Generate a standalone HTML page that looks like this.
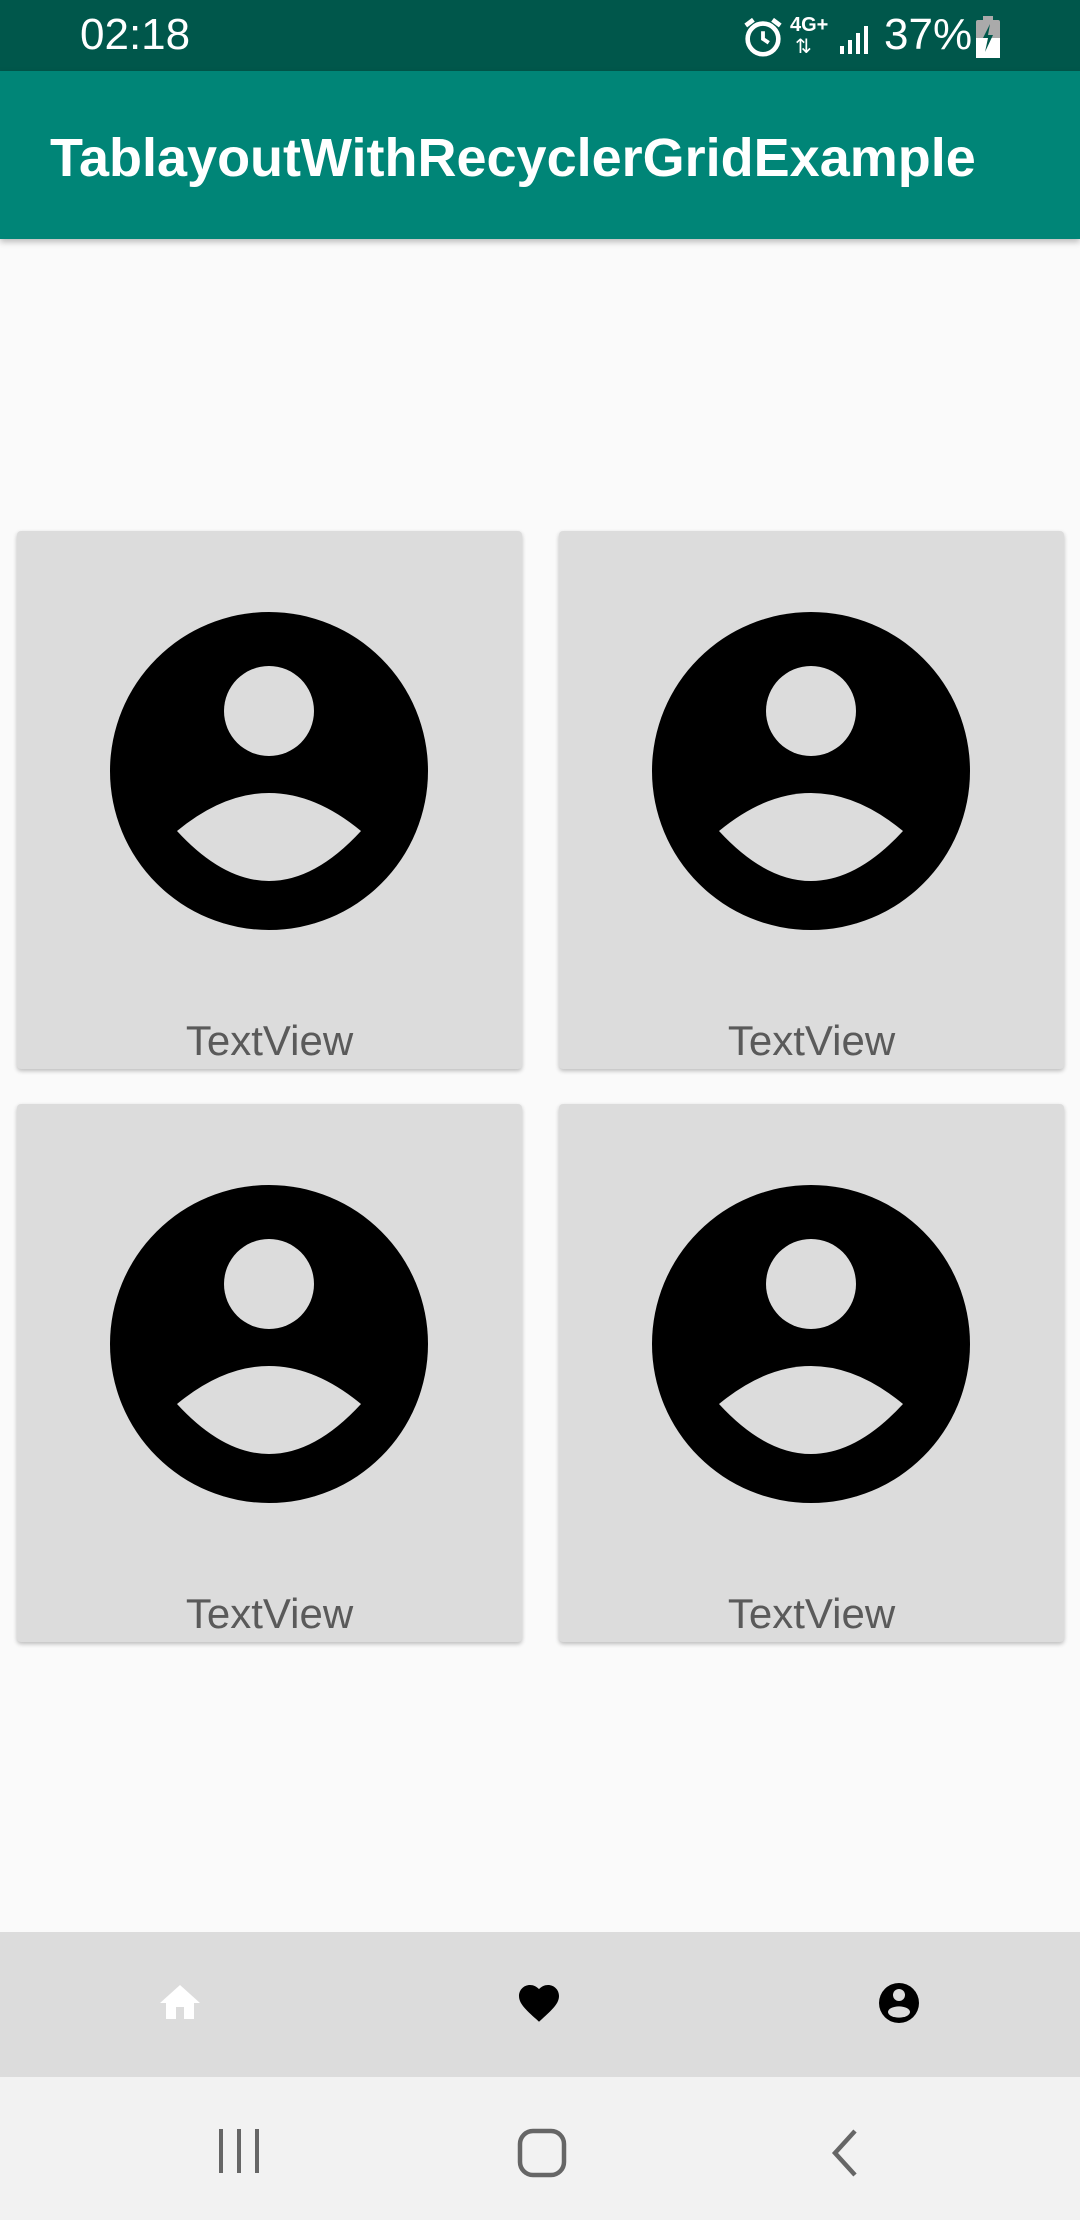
<!DOCTYPE html>
<html><head><meta charset="utf-8"><style>
*{margin:0;padding:0;box-sizing:border-box}
body{width:1080px;height:2220px;background:#fafafa;font-family:"Liberation Sans",Roboto,sans-serif;position:relative;overflow:hidden}
.status{position:absolute;top:0;left:0;width:1080px;height:71px;background:#00574b;color:#fff}
.appbar{position:absolute;top:71px;left:0;width:1080px;height:168px;background:#008577;box-shadow:0 3px 6px rgba(0,0,0,.25)}
.appbar span{position:absolute;left:50px;top:56px;font-size:54px;color:#fff;font-weight:bold}
.card{position:absolute;width:505px;height:538px;background:#dcdcdc;border-radius:4px;box-shadow:0 2px 4px rgba(0,0,0,.25)}
.card svg{position:absolute;left:92px;top:80px}
.card .t{position:absolute;left:0;width:100%;top:486px;text-align:center;font-size:42px;color:#5a5a5a}
.bnav{position:absolute;top:1932px;left:0;width:1080px;height:145px;background:#dcdcdc}
.nav{position:absolute;top:2077px;left:0;width:1080px;height:143px;background:#f2f2f2}
</style></head><body>
<div class="status">
  <span style="position:absolute;left:80px;top:10px;font-size:44px">02:18</span>
  <svg style="position:absolute;left:740px;top:14px" width="46" height="46" viewBox="0 0 24 24"><circle cx="12" cy="13" r="8" fill="none" stroke="#fff" stroke-width="2.4"/><path d="M12 9v4l3 2" stroke="#fff" stroke-width="2" fill="none"/><path d="M3 6l4-3M21 6l-4-3" stroke="#fff" stroke-width="2.4"/></svg>
  <span style="position:absolute;left:790px;top:14px;font-size:20px;font-weight:bold">4G+</span>
  <span style="position:absolute;left:795px;top:34px;font-size:20px">⇅</span>
  <svg style="position:absolute;left:838px;top:22px" width="34" height="34" viewBox="0 0 34 34"><rect x="2" y="24" width="4" height="8" fill="#fff"/><rect x="10" y="18" width="4" height="14" fill="#fff"/><rect x="18" y="11" width="4" height="21" fill="#fff"/><rect x="26" y="4" width="4" height="28" fill="#fff"/></svg>
  <span style="position:absolute;left:884px;top:10px;font-size:44px">37%</span>
  <svg style="position:absolute;left:975px;top:16px" width="26" height="42" viewBox="0 0 26 42"><rect x="8" y="0" width="10" height="4" fill="#aaa"/><rect x="1" y="4" width="24" height="38" rx="2" fill="#aaa"/><rect x="1" y="22" width="24" height="20" fill="#fff"/><path d="M15 8l-7 14h5l-3 14 8-17h-5z" fill="#00574b"/></svg>
</div>
<div class="appbar"><span>TablayoutWithRecyclerGridExample</span></div>

<div class="card" style="left:17px;top:531px"><svg width="320" height="320" viewBox="-160 -160 320 320"><circle r="159" fill="#000"/><circle cy="-60" r="45" fill="#dcdcdc"/><path d="M-92 60Q0 -16 92 60Q0 160 -92 60z" fill="#dcdcdc"/></svg><div class="t">TextView</div></div>
<div class="card" style="left:559px;top:531px"><svg width="320" height="320" viewBox="-160 -160 320 320"><circle r="159" fill="#000"/><circle cy="-60" r="45" fill="#dcdcdc"/><path d="M-92 60Q0 -16 92 60Q0 160 -92 60z" fill="#dcdcdc"/></svg><div class="t">TextView</div></div>
<div class="card" style="left:17px;top:1104px"><svg width="320" height="320" viewBox="-160 -160 320 320"><circle r="159" fill="#000"/><circle cy="-60" r="45" fill="#dcdcdc"/><path d="M-92 60Q0 -16 92 60Q0 160 -92 60z" fill="#dcdcdc"/></svg><div class="t">TextView</div></div>
<div class="card" style="left:559px;top:1104px"><svg width="320" height="320" viewBox="-160 -160 320 320"><circle r="159" fill="#000"/><circle cy="-60" r="45" fill="#dcdcdc"/><path d="M-92 60Q0 -16 92 60Q0 160 -92 60z" fill="#dcdcdc"/></svg><div class="t">TextView</div></div>

<div class="bnav">
  <svg style="position:absolute;left:156px;top:47px" width="48" height="48" viewBox="0 0 24 24"><path d="M10 20v-6h4v6h5v-8h3L12 3 2 12h3v8z" fill="#fff"/></svg>
  <svg style="position:absolute;left:515px;top:47px" width="48" height="48" viewBox="0 0 24 24"><path d="M12 21.35l-1.45-1.32C5.4 15.36 2 12.28 2 8.5 2 5.42 4.42 3 7.5 3c1.74 0 3.41.81 4.5 2.09C13.09 3.81 14.76 3 16.5 3 19.58 3 22 5.42 22 8.5c0 3.78-3.4 6.86-8.55 11.54L12 21.35z" fill="#000"/></svg>
  <svg style="position:absolute;left:875px;top:47px" width="48" height="48" viewBox="-12 -12 24 24"><circle r="10" fill="#000"/><circle cy="-4" r="3" fill="#dcdcdc"/><ellipse cy="4.5" rx="5.5" ry="2.8" fill="#dcdcdc"/></svg>
</div>
<div class="nav">
  <svg style="position:absolute;left:215px;top:50px" width="50" height="50" viewBox="0 0 50 50"><rect x="4" y="2" width="4" height="44" fill="#666"/><rect x="22" y="2" width="4" height="44" fill="#666"/><rect x="40" y="2" width="4" height="44" fill="#666"/></svg>
  <svg style="position:absolute;left:516px;top:50px" width="52" height="52" viewBox="0 0 52 52"><rect x="4" y="4" width="44" height="44" rx="13" fill="none" stroke="#666" stroke-width="4.5"/></svg>
  <svg style="position:absolute;left:825px;top:50px" width="40" height="52" viewBox="0 0 40 52"><path d="M30 4L10 26l20 22" fill="none" stroke="#666" stroke-width="4.5"/></svg>
</div>
</body></html>
